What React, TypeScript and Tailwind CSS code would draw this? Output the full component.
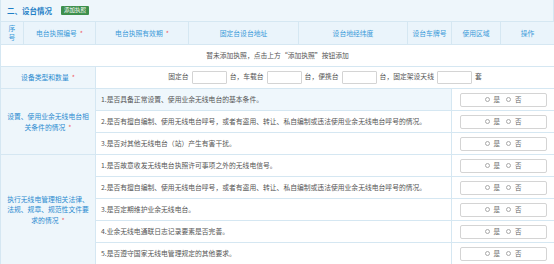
import React from "react"

const font = { fontFamily: '"Noto Sans CJK SC", "Noto Sans", sans-serif' }

const headers = [
  { label: "序号", w: "w-[23px]" },
  { label: "电台执照编号", w: "w-[72px]", req: true },
  { label: "电台执照有效期", w: "w-[93px]", req: true },
  { label: "固定台设台地址", w: "w-[110px]" },
  { label: "设台地经纬度", w: "w-[109px]" },
  { label: "设台车牌号", w: "w-[44px]" },
  { label: "使用区域", w: "w-[49px]" },
  { label: "操作", w: "w-[54px]" },
]

const setupQuestions = [
  "1.是否具备正常设置、使用业余无线电台的基本条件。",
  "2.是否有擅自编制、使用无线电台呼号，或者有盗用、转让、私自编制或违法使用业余无线电台呼号的情况。",
  "3.是否对其他无线电台（站）产生有害干扰。",
]

const lawQuestions = [
  "1.是否故意收发无线电台执照许可事项之外的无线电信号。",
  "2.是否有擅自编制、使用无线电台呼号，或者有盗用、转让、私自编制或违法使用业余无线电台呼号的情况。",
  "3.是否定期维护业余无线电台。",
  "4.业余无线电通联日志记录要素是否完善。",
  "5.是否遵守国家无线电管理规定的其他要求。",
]

function Star() {
  return <span className="text-[#f0575a] ml-[3px] leading-none">*</span>
}

function YesNo() {
  return (
    <div className="mx-auto w-[87px] h-[14px] border border-[#d4d4d4] rounded-[2px] bg-white flex items-center justify-center gap-[6px] text-[6.5px] text-[#666]">
      <span className="flex items-center gap-[4px]">
        <span className="inline-block w-[5px] h-[5px] rounded-full border border-[#a9a9a9]" />是
      </span>
      <span className="flex items-center gap-[4px]">
        <span className="inline-block w-[5px] h-[5px] rounded-full border border-[#a9a9a9]" />否
      </span>
    </div>
  )
}

function SmallInput() {
  return <span className="inline-block w-[35px] h-[13px] border border-[#d4d4d4] rounded-[1px] bg-white mx-[3px] align-middle" />
}

function QuestionRows({ lines, items, highlightFirst }: { lines: string[]; items: string[]; highlightFirst?: boolean }) {
  return (
    <>
      {items.map((q, i) => (
        <tr key={i} className="h-[22px]">
          {i === 0 && (
            <td
              colSpan={2}
              rowSpan={items.length}
              className="border border-[#d5e7f2] bg-[#eef6fb] text-[#2b8bd0] text-center text-[6.8px] leading-[10.5px] px-[4px]"
            >
              {lines.map((l, j) => (
                <div key={j} className="whitespace-nowrap">
                  {l}
                  {j === lines.length - 1 && <Star />}
                </div>
              ))}
            </td>
          )}
          <td
            colSpan={4}
            className={`border border-[#d5e7f2] px-[5px] text-[6.8px] text-[#555] whitespace-nowrap ${
              highlightFirst && i === 0 ? "bg-[#eff7fc]" : "bg-white"
            }`}
          >
            {q}
          </td>
          <td colSpan={2} className="border border-[#d5e7f2] bg-white">
            <YesNo />
          </td>
        </tr>
      ))}
    </>
  )
}

export default function App() {
  return (
    <div className="w-[554px] h-[264px] bg-white overflow-hidden" style={font}>
      <div className="h-[21px] bg-[#eef6fb] flex items-center pl-[6px] gap-[9px] border-x border-[#d5e7f2]">
        <span className="text-[7.5px] font-bold text-[#1e7fc6]">二、设台情况</span>
        <span className="h-[9px] px-[3px] bg-[#3d8f4c] text-white text-[5.5px] leading-[9px] rounded-[1px]">添加执照</span>
      </div>
      <table className="w-[554px] table-fixed border-collapse">
        <colgroup>
          {headers.map((h) => (
            <col key={h.label} className={h.w} />
          ))}
        </colgroup>
        <tbody>
          <tr className="h-[23px] bg-[#eaf4fb]">
            <td className="border border-[#d5e7f2] text-center text-[6.8px] leading-[9px] text-[#3a9ad9]">
              <div>序</div>
              <div>号</div>
            </td>
            {headers.slice(1).map((h) => (
              <td
                key={h.label}
                className="border border-[#d5e7f2] text-center text-[6.8px] leading-[9px] text-[#3a9ad9] px-[2px]"
              >
                {h.label}
                {h.req && <Star />}
              </td>
            ))}
          </tr>
          <tr className="h-[22px]">
            <td colSpan={8} className="border border-[#d5e7f2] text-center text-[6.8px] text-[#555]">
              暂未添加执照，点击上方“添加执照”按钮添加
            </td>
          </tr>
          <tr className="h-[22px]">
            <td colSpan={2} className="border border-[#d5e7f2] bg-[#eef6fb] text-center text-[6.8px] text-[#2b8bd0]">
              设备类型和数量
              <Star />
            </td>
            <td colSpan={6} className="border border-[#d5e7f2] bg-white text-center text-[6.8px] text-[#555] whitespace-nowrap">
              固定台
              <SmallInput />
              台，车载台
              <SmallInput />
              台，便携台
              <SmallInput />
              台，固定架设天线
              <SmallInput />
              套
            </td>
          </tr>
          <QuestionRows
            highlightFirst
            lines={["设置、使用业余无线电台相", "关条件的情况"]}
            items={setupQuestions}
          />
          <QuestionRows
            lines={["执行无线电管理相关法律、", "法规、规章、规范性文件要", "求的情况"]}
            items={lawQuestions}
          />
        </tbody>
      </table>
    </div>
  )
}
